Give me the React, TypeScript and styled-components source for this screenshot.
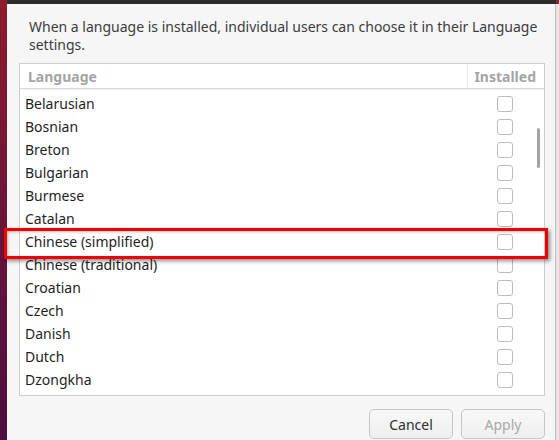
import React from 'react';
import styled, { createGlobalStyle } from 'styled-components';

const GlobalStyle = createGlobalStyle`
  html, body {
    margin: 0;
    padding: 0;
    background: #4c0e40;
  }
  body {
    font-family: 'Noto Sans', 'DejaVu Sans', sans-serif;
    -webkit-font-smoothing: antialiased;
  }
`;

const Screen = styled.div`
  position: relative;
  display: flex;
  width: 559px;
  height: 440px;
  overflow: hidden;
`;

const Wallpaper = styled.div<{ width: number }>`
  flex: 0 0 ${(p) => p.width}px;
  background: linear-gradient(180deg, #8e1c2c 0%, #6d1538 45%, #4c0e40 100%);
`;

const WindowArea = styled.div`
  flex: 1;
  display: flex;
  flex-direction: column;
  min-width: 0;
`;

const TitleEdge = styled.div`
  flex: 0 0 4px;
  background: #2c2c2c;
`;

const Dialog = styled.div`
  flex: 1;
  display: flex;
  flex-direction: column;
  background: #f6f6f6;
  padding: 14px 10px 0 12px;
  border-right: 1px solid #bdbdbd;
`;

const Description = styled.p`
  margin: 0 0 0 10px;
  font-size: 14px;
  line-height: 18px;
  color: #3c3c3c;
`;

const Frame = styled.div`
  position: relative;
  margin-top: 9px;
  height: 333px;
  box-sizing: border-box;
  border: 1px solid #cdcdcd;
  background: #fff;
  display: flex;
  flex-direction: column;
  overflow: hidden;
`;

const HeaderRow = styled.div`
  display: grid;
  grid-template-columns: 1fr 77px;
  height: 24px;
  border-bottom: 1px solid #d8d8d8;
  box-shadow: 0 1px 2px rgba(0, 0, 0, 0.06);
`;

const HeaderCell = styled.div<{ align?: 'left' | 'right' }>`
  display: flex;
  align-items: center;
  justify-content: ${(p) => (p.align === 'right' ? 'flex-end' : 'flex-start')};
  padding: 0 8px;
  font-size: 14px;
  font-weight: bold;
  color: #a4a4a4;
  & + & {
    border-left: 1px solid #ececec;
  }
`;

const Body = styled.div`
  flex: 1;
  padding-top: 3px;
  overflow: hidden;
`;

const Row = styled.div`
  display: grid;
  grid-template-columns: 1fr 77px;
  height: 23px;
  align-items: center;
`;

const LangName = styled.span`
  padding-left: 5px;
  font-size: 14px;
  color: #1e1e1e;
`;

const CheckCell = styled.div`
  display: flex;
  justify-content: center;
  padding-right: 1px;
`;

const Checkbox = styled.span<{ checked?: boolean }>`
  width: 14px;
  height: 14px;
  border: 1px solid ${(p) => (p.checked ? '#924d8b' : '#bcbcbc')};
  border-radius: 3px;
  background: ${(p) => (p.checked ? '#924d8b' : '#fff')};
  box-sizing: content-box;
`;

const Scrollbar = styled.div`
  position: absolute;
  right: 4px;
  top: 64px;
  width: 3px;
  height: 40px;
  border-radius: 2px;
  background: #a3a3a3;
`;

const ButtonRow = styled.div`
  margin-top: auto;
  display: flex;
  justify-content: flex-end;
  gap: 8px;
  padding-bottom: 1px;
`;

const Button = styled.button<{ disabled?: boolean }>`
  width: 84px;
  height: 30px;
  border: 1px solid #c6c6c6;
  border-radius: 5px;
  background: linear-gradient(180deg, #f8f8f8 0%, #efefef 100%);
  font-family: 'Noto Sans', 'DejaVu Sans', sans-serif;
  font-size: 14px;
  color: ${(p) => (p.disabled ? '#a9a9a9' : '#2e2e2e')};
  padding: 0;
`;

const RightEdge = styled.div`
  flex: 0 0 3px;
  display: flex;
  flex-direction: column;
  background: #e6e6e6;
  &::before {
    content: '';
    height: 4px;
    background: #8e1c2c;
  }
`;

const Highlight = styled.div`
  position: absolute;
  left: 4px;
  top: 228px;
  width: 538px;
  height: 25px;
  border: 3px solid #f00000;
  box-shadow: 2px 2px 4px rgba(0, 0, 0, 0.45), inset 1px 1px 3px rgba(0, 0, 0, 0.25);
  pointer-events: none;
`;

const languages = [
  'Belarusian',
  'Bosnian',
  'Breton',
  'Bulgarian',
  'Burmese',
  'Catalan',
  'Chinese (simplified)',
  'Chinese (traditional)',
  'Croatian',
  'Czech',
  'Danish',
  'Dutch',
  'Dzongkha',
];

const App = () => {
  return (
    <>
      <GlobalStyle />
      <Screen>
        <Wallpaper width={7} />
        <WindowArea>
          <TitleEdge />
          <Dialog>
            <Description>
              When a language is installed, individual users can choose it in their Language
              settings.
            </Description>
            <Frame>
              <HeaderRow>
                <HeaderCell>Language</HeaderCell>
                <HeaderCell align="right">Installed</HeaderCell>
              </HeaderRow>
              <Body>
                {languages.map((lang) => (
                  <Row key={lang}>
                    <LangName>{lang}</LangName>
                    <CheckCell>
                      <Checkbox />
                    </CheckCell>
                  </Row>
                ))}
                {/* next row (English, installed) is scrolled out of view */}
                <Row>
                  <LangName />
                  <CheckCell>
                    <Checkbox checked />
                  </CheckCell>
                </Row>
              </Body>
              <Scrollbar />
            </Frame>
            <ButtonRow>
              <Button type="button">Cancel</Button>
              <Button type="button" disabled>
                Apply
              </Button>
            </ButtonRow>
          </Dialog>
        </WindowArea>
        <RightEdge />
        <Highlight />
      </Screen>
    </>
  );
};

export default App;
